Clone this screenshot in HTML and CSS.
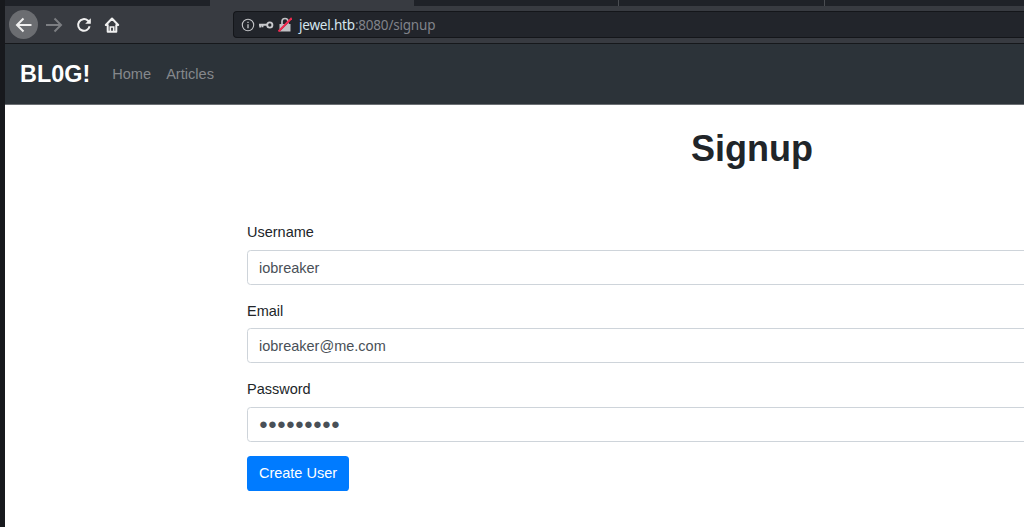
FILE: index.html
```html
<!DOCTYPE html>
<html lang="en">
<head>
<meta charset="utf-8">
<title>Signup</title>
<link rel="stylesheet" href="styles.css">
</head>
<body>
<div class="window">
  <div class="tabstrip">
    <div class="tab-dark tab-first"></div>
    <div class="tab-active"></div>
    <div class="tab-dark tab-a"></div>
    <div class="tab-dark tab-b"></div>
    <div class="tab-dark tab-c"></div>
  </div>
  <div class="toolbar">
    <div class="nav-icons">
      <span class="round-btn">
        <svg class="ico" viewBox="0 0 20 20" width="20" height="20"><path d="M17.500 10H3.500M9.500 3.500 3 10l6.500 6.500" fill="none" stroke="#f0f0f0" stroke-width="2"/></svg>
      </span>
      <svg class="ico fwd" viewBox="0 0 20 20" width="20" height="20"><path d="M3 10h15M11.500 3.500 18 10l-6.500 6.500" fill="none" stroke="#7c7e82" stroke-width="2"/></svg>
      <svg class="ico reload" viewBox="0 0 20 20" width="20" height="20"><path d="M15.600 11.200A5.800 5.800 0 1 1 13.800 5.600L15.800 7.500" fill="none" stroke="#f0f0f0" stroke-width="2"/><path d="M16.800 3.200v5.600h-5.600z" fill="#f0f0f0"/></svg>
      <svg class="ico home" viewBox="0 0 20 20" width="20" height="20"><path d="M10 3.500 3.800 10h1.900v6.800h8.600V10h1.900z" fill="none" stroke="#f0f0f0" stroke-width="2" stroke-linejoin="round"/><path d="M8.300 16.800v-4.800h3.400v4.800" fill="none" stroke="#f0f0f0" stroke-width="1.600"/></svg>
    </div>
    <div class="urlbar">
      <svg class="ico" viewBox="0 0 14 14" width="14" height="14"><circle cx="7" cy="7" r="5.700" fill="none" stroke="#c4c5c8" stroke-width="1.100"/><path d="M7 6.200v4M7 3.800v1.200" stroke="#c4c5c8" stroke-width="1.300"/></svg>
      <svg class="ico key" viewBox="0 0 16 10" width="16" height="10"><circle cx="11.800" cy="5" r="2.600" fill="none" stroke="#c8c9cc" stroke-width="1.900"/><path d="M9 4.800H1M2.200 5v2.500M4.500 5v2.200" fill="none" stroke="#c8c9cc" stroke-width="1.900"/></svg>
      <svg class="ico lock" viewBox="0 0 14 15" width="14" height="15"><path d="M1.500 7h11v7.500h-11z" fill="#c0c1c4"/><path d="M4 7V4.500a3 3 0 0 1 6 0V7" fill="none" stroke="#c0c1c4" stroke-width="1.700"/><path d="M-.5 15.800 13.500 1.800" stroke="#22252b" stroke-width="1.200"/><path d="M.5 14.500 13.800 1" stroke="#f22b50" stroke-width="2"/></svg>
      <span class="url"><span class="host">jewel.htb</span><span class="rest">:8080/signup</span></span>
    </div>
  </div>
  <div class="page">
    <nav class="navbar">
      <a class="brand">BL0G!</a>
      <a class="nav-link">Home</a>
      <a class="nav-link">Articles</a>
    </nav>
    <main class="content">
      <h1 class="title">Signup</h1>
      <form class="form">
        <div class="group">
          <label class="label">Username</label>
          <div class="input">iobreaker</div>
        </div>
        <div class="group">
          <label class="label">Email</label>
          <div class="input">iobreaker@me.com</div>
        </div>
        <div class="group">
          <label class="label">Password</label>
          <div class="input dots">●●●●●●●●●</div>
        </div>
        <span class="btn">Create User</span>
      </form>
    </main>
  </div>
</div>
</body>
</html>
```
FILE: styles.css
```css
* { box-sizing: border-box; }
html, body { margin: 0; height: 100%; overflow: hidden; background: #fff; }
body { font-family: "Liberation Sans", Arial, sans-serif; }

.window { width: 1024px; height: 527px; display: flex; flex-direction: column; overflow: hidden; border-left: 5px solid #17191d; }

.tabstrip { height: 8px; flex: none; display: flex; background: #383b41; }
.tab-dark { background: #1f2228; height: 6px; }
.tab-first { width: 205px; }
.tab-active { width: 204px; }
.tab-a { width: 205px; border-right: 1px solid #4a4d52; }
.tab-b { width: 206px; border-right: 1px solid #4a4d52; }
.tab-c { flex: 1; }

.toolbar { height: 36px; flex: none; display: flex; align-items: center; padding-bottom: 2px; background: #383b41; border-bottom: 1px solid #16181b; }
.nav-icons { display: flex; align-items: center; width: 228px; }
.ico { display: block; flex: none; }
.round-btn { width: 29px; height: 29px; margin-left: 4px; border-radius: 50%; background: #6b6d71; display: flex; align-items: center; justify-content: center; }
.fwd { margin-left: 5px; }
.reload { margin-left: 11px; }
.home { margin-left: 8px; }

.urlbar { flex: 1; height: 27px; display: flex; align-items: center; padding-left: 7px; background: #22252b; border: 1px solid #14161a; border-right: 0; border-radius: 4px 0 0 4px; }
.key { margin-left: 3px; }
.lock { margin-left: 4px; }
.url { margin-left: 7px; font: 13.500px "Noto Sans", sans-serif; letter-spacing: -0.200px; }
.host { color: #d5e6ee; }
.rest { color: #80838a; }

.page { flex: 1; min-height: 0; }
.navbar { height: 61px; display: flex; align-items: center; padding-left: 15px; background: #2c3339; border-bottom: 1px solid #6b6f73; }
.brand { font-size: 23.400px; font-weight: 700; color: #fff; margin-right: 22px; }
.nav-link { font-size: 14.600px; color: #85888c; margin-right: 15px; }

.content { padding: 22px 0 0 242px; width: 1252px; }
.title { margin: 0 0 51px; font-size: 36px; line-height: 43.200px; font-weight: 700; color: #212529; text-align: center; }
.form { display: block; }
.group { margin-bottom: 14.500px; }
.label { display: block; margin-bottom: 6.800px; font-size: 14.500px; line-height: 22px; color: #212529; }
.input { height: 35px; padding: 0 11px; display: flex; align-items: center; font-size: 14.500px; color: #495057; background: #fff; border: 1px solid #ced4da; border-radius: 3.600px; }
.dots { font-size: 14.900px; }
.btn { display: inline-block; width: 102px; height: 35px; line-height: 34px; text-align: center; font-size: 14.500px; color: #fff; background: #007bff; border-radius: 3.600px; }
```
